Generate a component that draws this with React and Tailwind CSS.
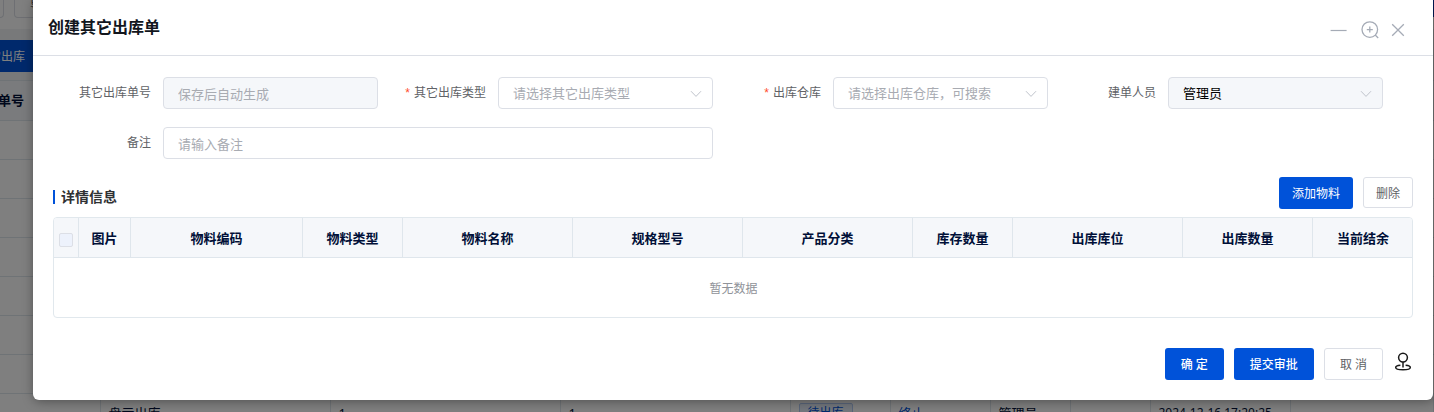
import React from 'react';

const columns = [
  { title: '图片', width: 52 },
  { title: '物料编码', width: 172 },
  { title: '物料类型', width: 100 },
  { title: '物料名称', width: 170 },
  { title: '规格型号', width: 170 },
  { title: '产品分类', width: 170 },
  { title: '库存数量', width: 100 },
  { title: '出库库位', width: 170 },
  { title: '出库数量', width: 130 },
  { title: '当前结余', width: 100 },
];

const orders = [0, 1, 2, 3, 4, 5, 6];

const ChevronIcon = () => (
  <svg
    viewBox="0 0 12 12"
    className="pointer-events-none absolute right-[11px] top-[11px] h-3 w-3"
    fill="none"
    stroke="#c0c4cc"
    strokeWidth="1"
  >
    <path d="M1 3.2 6 8.4 11 3.2" />
  </svg>
);

const Field = ({ id, label, required, wide, children }) => (
  <div className={`flex items-center ${wide ? 'col-span-2' : ''}`}>
    <label htmlFor={id} className="flex w-[120px] shrink-0 items-center justify-end pr-3 text-xs text-[#606266]">
      {required && <span className="mr-1 font-['Liberation_Sans',sans-serif] text-[#ff4d2e]">*</span>}
      {label}
    </label>
    <div className="relative min-w-0 flex-1">{children}</div>
  </div>
);

const TextField = ({ id, placeholder, disabled }) => (
  <input
    id={id}
    type="text"
    placeholder={placeholder}
    disabled={disabled}
    className="block h-8 w-full rounded border border-[#dcdfe6] bg-white px-[14px] pt-px text-[13px] placeholder:text-[#a8abb2] disabled:bg-[#f5f7fa]"
  />
);

const SelectField = ({ id, text, disabled }) => (
  <>
    <select
      id={id}
      disabled={disabled}
      className="block h-8 w-full appearance-none rounded border border-[#dcdfe6] bg-white px-[14px] pt-px text-[13px] text-[#a8abb2] disabled:bg-[#f5f7fa] disabled:text-black disabled:opacity-100"
    >
      <option>{text}</option>
    </select>
    <ChevronIcon />
  </>
);

const PrimaryButton = ({ children }) => (
  <button type="button" className="h-8 rounded-[3px] bg-[#0052d9] px-4 pt-[2px] text-xs font-medium text-white">
    {children}
  </button>
);

const PlainButton = ({ children }) => (
  <button type="button" className="h-8 rounded-[3px] border border-[#dcdfe6] bg-white px-[15px] pt-[2px] text-xs text-[#606266]">
    {children}
  </button>
);

// Order list that stays visible under the mask
const OrderList = () => (
  <div className="h-full overflow-hidden bg-[#f0f2f5]">
    <div className="flex h-[29px] bg-white">
      <div className="h-[18px] w-1 rounded-br border-b border-r border-[#dcdfe6]" />
      <div className="ml-[10px] h-[18px] w-20 rounded-b border border-t-0 border-[#dcdfe6] pl-[15px] text-xs leading-3 text-[#606266]">
        导出
      </div>
      <div className="ml-auto h-[17px] w-1 bg-[#0037b4]" />
    </div>
    <div className="mt-[11px] flex h-8 w-20 items-center bg-[#0052d9]">
      <span className="-ml-[11px] pt-[2px] text-xs text-white">它出库</span>
    </div>
    <table className="mt-2 w-full table-fixed text-left text-[13px] text-[#000f37]">
      <colgroup>
        <col className="w-[100px]" />
        <col className="w-[230px]" />
        <col className="w-[230px]" />
        <col className="w-[230px]" />
        <col className="w-[100px]" />
        <col className="w-[100px]" />
        <col className="w-[80px]" />
        <col className="w-[80px]" />
        <col className="w-[140px]" />
        <col />
      </colgroup>
      <thead>
        <tr className="h-10 border-y border-[#dfe6ec] bg-[#f5f7fa]">
          <th colSpan={10} className="font-bold">
            <span className="-ml-[2px]">单号</span>
          </th>
        </tr>
      </thead>
      <tbody className="bg-white">
        {orders.map((n) => (
          <tr key={n} className="h-[39px] border-b border-[#dfe6ec]">
            <td colSpan={10} />
          </tr>
        ))}
        <tr className="h-[39px] [&>td]:border-r [&>td]:border-[#dfe6ec] [&>td]:px-2">
          <td />
          <td>盘亏出库</td>
          <td>1</td>
          <td>1</td>
          <td>
            <span className="block w-[54px] rounded-xs border border-[#b3cbf4] bg-[#e6eefb] text-center text-xs leading-[18px] text-[#0052d9]">
              待出库
            </span>
          </td>
          <td className="text-[#0052d9]">终止</td>
          <td>管理员</td>
          <td />
          <td className="whitespace-nowrap text-xs">2024-12-16 17:20:25</td>
          <td />
        </tr>
      </tbody>
    </table>
  </div>
);

const DialogHeader = () => (
  <header className="flex h-14 items-center justify-between border-b border-[#dcdfe6] pl-[15px] pr-7">
    <h1 className="pb-px text-base font-bold text-[#12161d]">创建其它出库单</h1>
    <div className="mt-1 flex items-center text-[#a5abb6]">
      <button type="button" aria-label="最小化" className="mr-[14px]">
        <svg viewBox="0 0 18 18" className="h-[18px] w-[18px]" fill="none" stroke="currentColor" strokeWidth="1.2">
          <path d="M1.6 9.5H17.6" />
        </svg>
      </button>
      <button type="button" aria-label="放大" className="mr-3">
        <svg viewBox="0 0 18 18" className="h-[18px] w-[18px]" fill="none" stroke="currentColor" strokeWidth="1.3">
          <circle cx="8.8" cy="8.6" r="7.8" />
          <path d="M14.2 14 17.2 17M5.8 8.6H11.8M8.8 5.6V11.6" />
        </svg>
      </button>
      <button type="button" aria-label="关闭">
        <svg viewBox="0 0 14 14" className="h-[14px] w-[14px]" fill="none" stroke="currentColor" strokeWidth="1.3">
          <path d="M1.2 1.2 12.8 12.8M12.8 1.2 1.2 12.8" />
        </svg>
      </button>
    </div>
  </header>
);

const DetailTable = () => (
  <div className="mt-2 overflow-hidden rounded border border-[#e1e8ed]">
    <table className="w-full table-fixed border-separate border-spacing-0 text-[13px]">
      <thead>
        <tr className="h-10 bg-[#f5f7fa]">
          <th className="w-[25px] border-b border-r border-[#dfe6ec] p-0">
            <input
              type="checkbox"
              aria-label="全选"
              disabled
              className="mx-auto mt-1 block h-[14px] w-[14px] appearance-none rounded-xs border border-[#dcdfe6] bg-[#edf2fc]"
            />
          </th>
          {columns.map((col) => (
            <th
              key={col.title}
              style={{ width: col.width }}
              className="border-b border-r border-[#dfe6ec] p-0 pt-[2px] font-bold text-[#000f37] last:border-r-0"
            >
              {col.title}
            </th>
          ))}
        </tr>
      </thead>
      <tbody>
        <tr className="h-[59px]">
          <td colSpan={11} className="pt-[3px] text-center text-xs text-[#909399]">
            暂无数据
          </td>
        </tr>
      </tbody>
    </table>
  </div>
);

const App = () => {
  return (
    <div className="relative h-screen overflow-hidden font-['Noto_Sans','Noto_Sans_CJK_SC',sans-serif]">
      <OrderList />

      <div className="absolute inset-0 bg-black/50 pl-[33px] pr-px">
        <div role="dialog" aria-label="创建其它出库单" className="rounded-b-md bg-white shadow-[1px_1px_12px_rgba(0,0,0,0.4)]">
          <DialogHeader />

          <form className="grid grid-cols-4 gap-y-[18px] pl-[10px] pr-[50px] pt-[21px]">
            <Field id="orderNo" label="其它出库单号">
              <TextField id="orderNo" placeholder="保存后自动生成" disabled />
            </Field>
            <Field id="orderType" label="其它出库类型" required>
              <SelectField id="orderType" text="请选择其它出库类型" />
            </Field>
            <Field id="warehouse" label="出库仓库" required>
              <SelectField id="warehouse" text="请选择出库仓库，可搜索" />
            </Field>
            <Field id="creator" label="建单人员">
              <SelectField id="creator" text="管理员" disabled />
            </Field>
            <Field id="remark" label="备注" wide>
              <TextField id="remark" placeholder="请输入备注" />
            </Field>
          </form>

          <section className="px-5 pt-[18px]">
            <div className="flex items-end justify-between">
              <h2 className="flex items-center text-sm leading-6 font-bold text-[#303133]">
                <span className="mr-[6px] h-[14px] w-[2px] bg-[#0052d9]" />
                详情信息
              </h2>
              <div className="flex gap-[10px]">
                <button type="button" className="h-8 rounded-[3px] bg-[#0052d9] px-[13px] pt-[2px] text-xs text-white">
                  添加物料
                </button>
                <button type="button" className="h-[31px] rounded-[3px] border border-[#dcdfe6] bg-white px-3 pt-[2px] text-xs text-[#606266]">
                  删除
                </button>
              </div>
            </div>
            <DetailTable />
          </section>

          <footer className="flex items-center justify-end gap-[10px] px-5 pb-5 pt-[30px]">
            <PrimaryButton>确 定</PrimaryButton>
            <PrimaryButton>提交审批</PrimaryButton>
            <PlainButton>取 消</PlainButton>
            <button type="button" aria-label="审批流程" className="pb-1">
              <svg viewBox="0 0 20 20" className="h-5 w-5" fill="none" stroke="#1a1a1a" strokeWidth="1.5">
                <circle cx="10" cy="5.6" r="4.4" />
                <path d="M10 10V15.4" />
                <path d="M7.4 13.2C4.6 13.4 2.7 14.3 2.7 15.5 2.7 17 5.9 17.8 10 17.8S17.3 17 17.3 15.5C17.3 14.3 15.4 13.4 12.6 13.2" />
              </svg>
            </button>
          </footer>
        </div>
      </div>
    </div>
  );
};

export default App;
